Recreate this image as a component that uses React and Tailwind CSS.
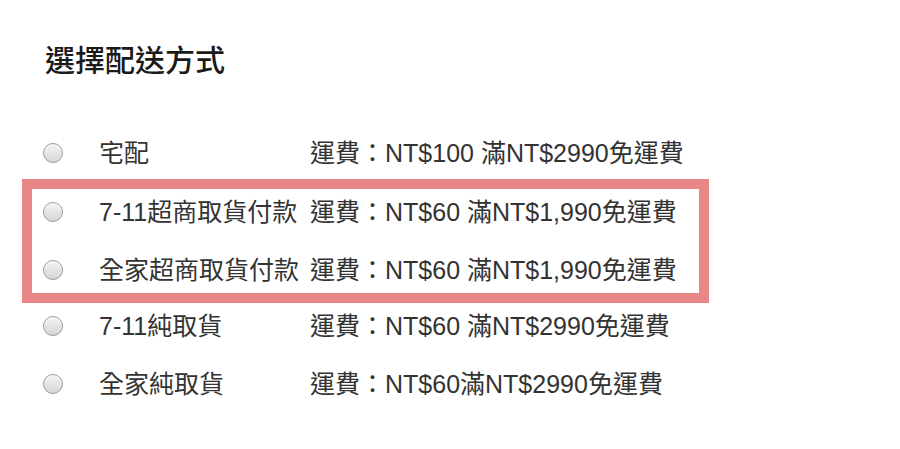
import React from "react";

const font = { fontFamily: '"Liberation Sans", "Noto Sans CJK TC", sans-serif' };

function Radio() {
  return (
    <span className="block h-[20px] w-[20px] shrink-0 rounded-full border border-[#9a9a9a] bg-gradient-to-b from-[#f4f4f4] to-[#d6d6d6] shadow-[inset_0_1px_1px_rgba(255,255,255,0.9)]" />
  );
}

function Row({ label, fee, inBox }) {
  return (
    <div className={`flex h-[46px] items-center ${inBox ? "pl-[11px]" : "pl-[21px]"}`}>
      <Radio />
      <span className="ml-[36px] w-[211px] shrink-0 whitespace-nowrap">{label}</span>
      <span className="whitespace-nowrap">{fee}</span>
    </div>
  );
}

export default function App() {
  return (
    <div className="h-[449px] w-[900px] bg-white text-[25px] leading-none text-[#333]" style={font}>
      <div className="pt-[46px] pl-[45px] text-[30px] font-medium leading-none text-[#1a1a1a]">選擇配送方式</div>
      <div className="ml-[22px] mt-[54px] flex w-[687px] flex-col">
        <Row label="宅配" fee="運費：NT$100 滿NT$2990免運費" />
        <div className="mt-[3px] flex flex-col gap-[12px] border-[10px] border-[#ea8588]">
          <Row inBox label="7-11超商取貨付款" fee="運費：NT$60 滿NT$1,990免運費" />
          <Row inBox label="全家超商取貨付款" fee="運費：NT$60 滿NT$1,990免運費" />
        </div>
        <Row label="7-11純取貨" fee="運費：NT$60 滿NT$2990免運費" />
        <div className="mt-[12px]">
          <Row label="全家純取貨" fee="運費：NT$60滿NT$2990免運費" />
        </div>
      </div>
    </div>
  );
}
